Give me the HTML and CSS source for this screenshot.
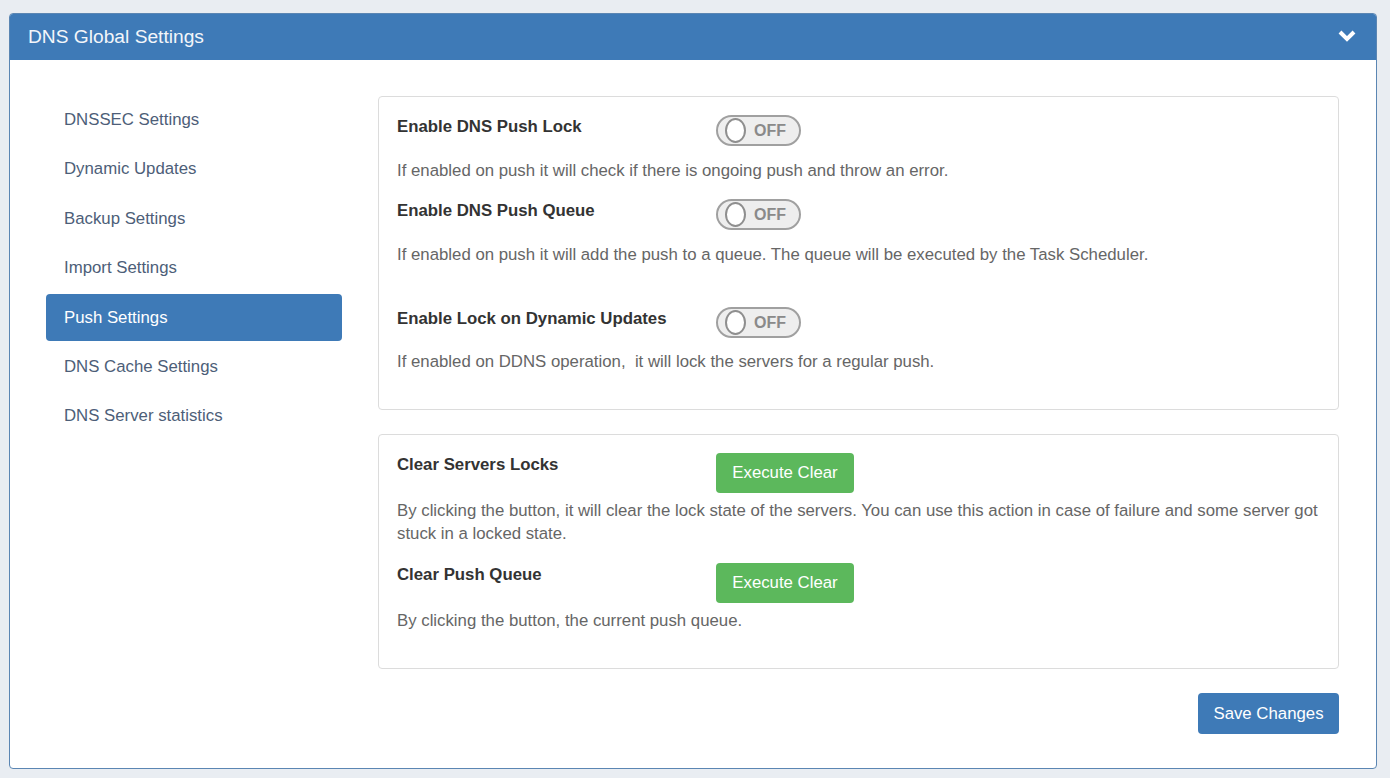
FILE: index.html
```html
<!DOCTYPE html>
<html>
<head>
<meta charset="utf-8">
<link rel="stylesheet" href="styles.css">
</head>
<body>
<div class="panel">
  <div class="panel-head">
    <span class="panel-title">DNS Global Settings</span>
    <svg class="chev" width="18" height="14" viewBox="0 0 18 14"><path d="M2 3 L9 10 L16 3" fill="none" stroke="#fff" stroke-width="4" stroke-linejoin="miter"/></svg>
  </div>
  <div class="panel-body">
    <ul class="nav">
      <li class="nav-item">DNSSEC Settings</li>
      <li class="nav-item">Dynamic Updates</li>
      <li class="nav-item">Backup Settings</li>
      <li class="nav-item">Import Settings</li>
      <li class="nav-item active">Push Settings</li>
      <li class="nav-item">DNS Cache Settings</li>
      <li class="nav-item">DNS Server statistics</li>
    </ul>
    <div class="content">
      <div class="card card-push">
        <div class="row">
          <div class="label">Enable DNS Push Lock</div>
          <div class="toggle"><span class="knob"></span><span class="off">OFF</span></div>
        </div>
        <p class="desc">If enabled on push it will check if there is ongoing push and throw an error.</p>
        <div class="row">
          <div class="label">Enable DNS Push Queue</div>
          <div class="toggle"><span class="knob"></span><span class="off">OFF</span></div>
        </div>
        <p class="desc">If enabled on push it will add the push to a queue. The queue will be executed by the Task Scheduler.</p>
        <div class="row row-spaced">
          <div class="label">Enable Lock on Dynamic Updates</div>
          <div class="toggle"><span class="knob"></span><span class="off">OFF</span></div>
        </div>
        <p class="desc desc-last">If enabled on DDNS operation,&nbsp; it will lock the servers for a regular push.</p>
      </div>
      <div class="card card-clear">
        <div class="row">
          <div class="label">Clear Servers Locks</div>
          <button class="btn btn-green">Execute Clear</button>
        </div>
        <p class="desc">By clicking the button, it will clear the lock state of the servers. You can use this action in case of failure and some server got stuck in a locked state.</p>
        <div class="row">
          <div class="label">Clear Push Queue</div>
          <button class="btn btn-green">Execute Clear</button>
        </div>
        <p class="desc">By clicking the button, the current push queue.</p>
      </div>
      <div class="actions">
        <button class="btn btn-blue">Save Changes</button>
      </div>
    </div>
  </div>
</div>
</body>
</html>
```
FILE: styles.css
```css
html, body {
  margin: 0;
  padding: 0;
  background: #e9edf2;
  font-family: "Liberation Sans", Arial, sans-serif;
}
body {
  padding: 13px 13px 0 9px;
}
.panel {
  background: #fff;
  border: 1px solid #5b86b3;
  border-radius: 4px;
  height: 756px;
  box-sizing: border-box;
  overflow: hidden;
}
.panel-head {
  background: #3e7ab7;
  height: 46px;
  display: flex;
  align-items: center;
  justify-content: space-between;
  padding: 0 20px 0 18px;
}
.panel-title {
  color: #f3f6fa;
  font-size: 19.2px;
}
.chev {
  display: block;
  margin-top: -2px;
}
.panel-body {
  display: flex;
  padding: 36px 37px 0 36px;
  gap: 36px;
}
.nav {
  list-style: none;
  margin: 0;
  padding: 0;
  width: 296px;
  flex: none;
}
.nav-item {
  padding: 10px 18px;
  line-height: 27px;
  font-size: 16.8px;
  color: #4d5e78;
  margin-bottom: 2.4px;
  border-radius: 4px;
}
.nav-item.active {
  background: #3e7ab7;
  color: #fff;
}
.content {
  flex: 1;
}
.card {
  border: 1px solid #dcdcdc;
  border-radius: 4px;
  padding: 18px 18px 0 18px;
  margin-bottom: 24px;
}
.card-push { height: 314px; box-sizing: border-box; }
.card-clear { height: 235px; box-sizing: border-box; }
.row {
  display: flex;
  align-items: flex-start;
}
.row-spaced {
  margin-top: 41px;
}
.label {
  width: 319px;
  flex: none;
  font-weight: bold;
  font-size: 16.8px;
  line-height: 22px;
  padding-top: 1px;
  color: #333;
}
.desc {
  margin: 13px 0 17px;
  font-size: 16.8px;
  line-height: 23px;
  color: #666;
}
.desc-last {
  margin: 12px 0 0;
}
.card-clear .desc {
  margin: 6px 0 18px;
}
.toggle {
  width: 85px;
  height: 31px;
  box-sizing: border-box;
  border: 2px solid #a0a0a0;
  border-radius: 16px;
  background: #eeeeee;
  display: flex;
  align-items: center;
  padding-left: 7px;
}
.knob {
  width: 17px;
  height: 21px;
  border: 2px solid #8f8f8f;
  border-radius: 50%;
  background: #fff;
  flex: none;
}
.off {
  margin-left: 8px;
  font-weight: bold;
  font-size: 16px;
  color: #8a8a8a;
}
.btn {
  font-family: "Liberation Sans", Arial, sans-serif;
  font-size: 16.8px;
  color: #fff;
  border: none;
  border-radius: 4px;
  cursor: pointer;
}
.btn-green {
  background: #5cb85c;
  width: 138px;
  height: 40px;
  margin-top: 0;
}
.btn-blue {
  background: #3e7ab7;
  width: 141px;
  height: 41px;
}
.actions {
  display: flex;
  justify-content: flex-end;
}
```
